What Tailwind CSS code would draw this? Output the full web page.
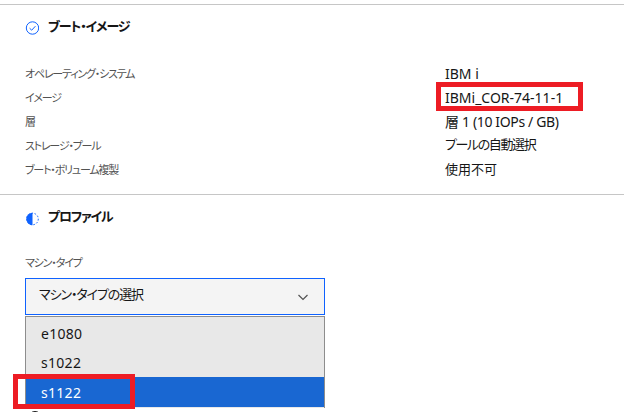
<!DOCTYPE html>
<html lang="ja">
<head>
    <meta charset="UTF-8">
    <title>ブート・イメージ</title>
    <script src="https://cdn.jsdelivr.net/npm/@tailwindcss/browser@4"></script>
</head>
<body class="bg-white h-[412px] w-[624px] overflow-hidden text-[#161616] [font-feature-settings:'palt'] font-['Noto_Sans','Noto_Sans_CJK_JP',sans-serif]">
    <!-- Boot image -->
    <section class="mt-[4px] h-[190px] border-t border-[#c6c6c6] pl-[25px]">
        <div class="flex items-center gap-[9px] pt-[7px] h-[35px]">
            <svg class="mt-[4px] h-[14px] w-[14px]" viewBox="0 0 14 14" fill="none" stroke="#0f62fe" stroke-width="1">
                <circle cx="7.5" cy="7" r="6.2"/>
                <path d="M4.6 7.2 6.7 9.2 10.4 5.2"/>
            </svg>
            <h2 class="text-[13px] leading-[20px] font-semibold tracking-[-1.1px]">ブート・イメージ</h2>
        </div>
        <div class="mt-[21px] text-[#525252] text-[11px] tracking-[-1.2px]">
            <div class="grid grid-cols-[420px_1fr] h-[24px] items-center">
                <span class="mt-[2px]">オペレーティング・システム</span>
                <span class="text-[14px] text-[#161616] tracking-normal">IBM i</span>
            </div>
            <div class="grid grid-cols-[420px_1fr] h-[24px] items-center">
                <span class="mt-[2px]">イメージ</span>
                <span class="relative text-[14px] text-[#161616] tracking-normal">IBMi_COR-74-11-1
                    <span class="absolute left-[-9px] top-[-5px] h-[29px] w-[147px] border-[5px] border-[#ed1c24]"></span>
                </span>
            </div>
            <div class="grid grid-cols-[420px_1fr] h-[24px] items-center">
                <span class="mt-[2px]">層</span>
                <span class="text-[14px] text-[#161616] tracking-[-0.35px]">層 1 (10 IOPs / GB)</span>
            </div>
            <div class="grid grid-cols-[420px_1fr] h-[24px] items-center">
                <span class="mt-[2px]">ストレージ・プール</span>
                <span class="text-[13px] text-[#161616] tracking-[-1.4px] [font-feature-settings:'normal']">プールの自動選択</span>
            </div>
            <div class="grid grid-cols-[420px_1fr] h-[25px] items-center">
                <span class="mt-[2px]">ブート・ボリューム複製</span>
                <span class="text-[13px] text-[#161616] tracking-normal">使用不可</span>
            </div>
        </div>
    </section>

    <!-- Profile -->
    <section class="border-t border-[#c6c6c6] pl-[25px]">
        <div class="flex items-center gap-[9px] pt-[7px] h-[35px]">
            <svg class="mt-[6px] h-[14px] w-[14px]" viewBox="0 0 14 14" fill="none">
                <path d="M7.5 .8a6.2 6.2 0 0 0 0 12.4z" fill="#0f62fe"/>
                <circle cx="7.5" cy="7" r="5.8" stroke="#0f62fe" stroke-width="1" stroke-dasharray="1.6 1.6"/>
            </svg>
            <h2 class="text-[13px] leading-[20px] font-semibold tracking-[-1.2px]">プロファイル</h2>
        </div>
        <label class="block mt-[25px] text-[11px] leading-[16px] text-[#525252] tracking-[-1.15px]">マシン・タイプ</label>
        <div class="mt-[7px] w-[300px]">
            <div class="flex items-center justify-between h-[37px] border border-[#0f62fe] bg-[#f4f4f4] pl-[13px] pr-[15px]">
                <span class="mb-[3px] text-[13px] tracking-[-1.1px]">マシン・タイプの選択</span>
                <svg class="h-[12px] w-[12px]" viewBox="0 0 12 12" fill="none" stroke="#525252" stroke-width="1.2">
                    <path d="M1.5 4 6 8.5 10.5 4"/>
                </svg>
            </div>
            <div class="relative mt-[1px] h-[92px] border-x border-t border-[#8d8d8d] bg-[#e8e8e8] text-[14px] tracking-[0.3px]">
                <div class="h-[30px] pt-[3px] pl-[15px] flex items-center">e1080</div>
                <div class="h-[30px] pt-[1px] pl-[15px] flex items-center">s1022</div>
                <div class="h-[30px] pl-[15px] flex items-center bg-[#1967d2] text-white">s1122</div>
                <span class="absolute left-[-13px] top-[57px] h-[35px] w-[122px] border-[5px] border-[#ed1c24]"></span>
            </div>
            <div class="mt-[3px] ml-[3px] h-[14px] w-[14px] rounded-full border border-[#161616]"></div>
        </div>
    </section>
</body>
</html>
